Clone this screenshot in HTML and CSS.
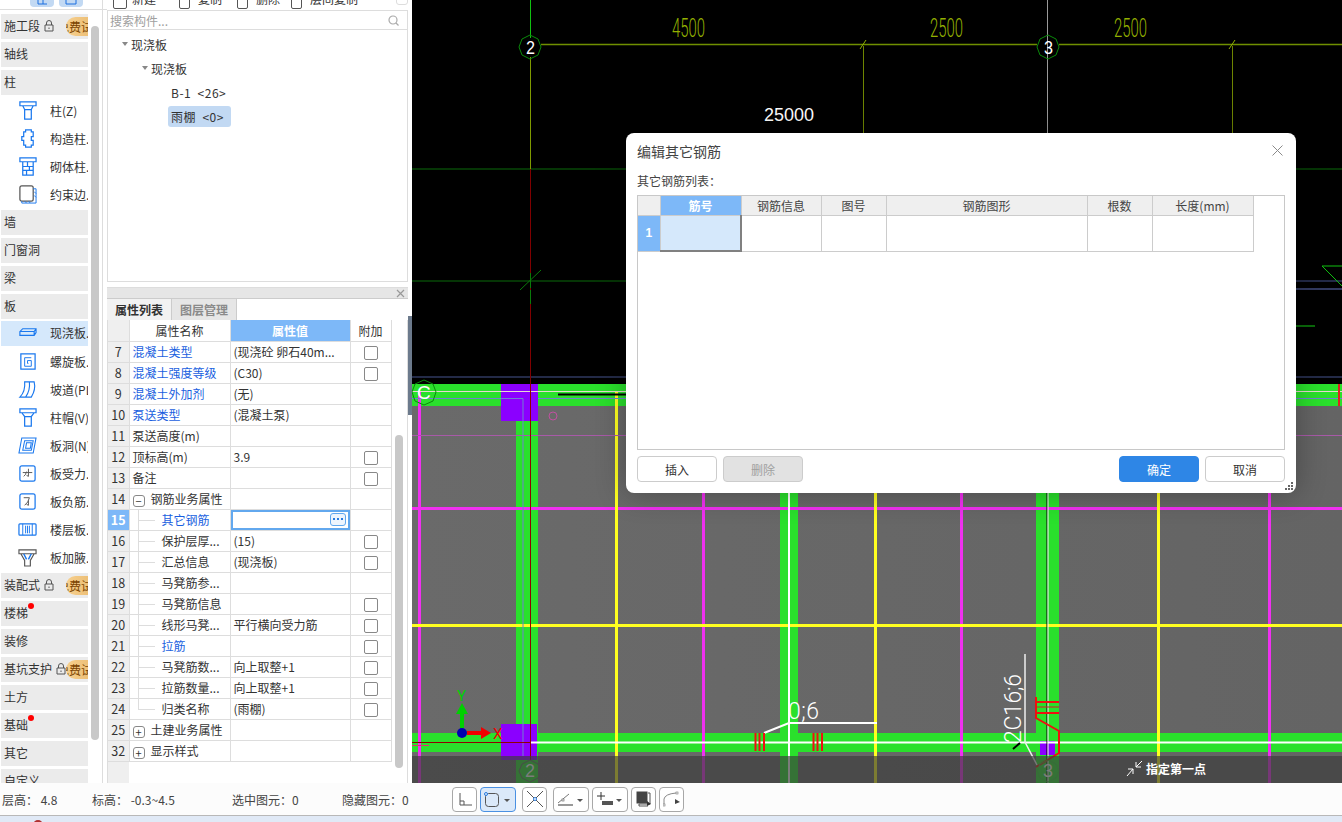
FILE: index.html
```html
<!DOCTYPE html>
<html lang="zh">
<head>
<meta charset="utf-8">
<title>编辑其它钢筋</title>
<link rel="stylesheet" href="styles.css">
</head>
<body>
<div class="app">
  <div class="main">
    <nav class="nav">
      <div class="nav-top">
        <span class="nav-top-btn"><svg width="14" height="6" viewBox="0 0 14 6"><path d="M3 0v4h9M8 0v4" fill="none" stroke="#1a6fe0"/></svg></span>
        <span class="nav-top-btn"><svg width="14" height="6" viewBox="0 0 14 6"><path d="M2 0v4h10V0" fill="none" stroke="#1a6fe0"/></svg></span>
      </div>
      <div class="nav-list">
        <div class="nav-group">施工段<svg class="lock" width="10" height="12" viewBox="0 0 10 12"><path d="M2.5 5V3a2.5 2.5 0 0 1 5 0v2M1 5h8v6H1zM5 7.500v1.500" fill="none" stroke="#555"/></svg><span class="badge"><span>免费试</span></span></div>
        <div class="nav-group">轴线</div>
        <div class="nav-group">柱</div>
        <div class="nav-sub">
          <div class="nav-item"><svg class="ni" viewBox="0 0 20 20"><path d="M2 1h17v4h-17zM5 5l2 4v10h7V9l2-4M7 9h7" fill="none" stroke="#1a78ee" stroke-width="1.300"/></svg>柱(Z)</div>
          <div class="nav-item"><svg class="ni" viewBox="0 0 20 20"><path d="M6 3h2V1h6v2h2v5h-2v4h2v5h-2v2H8v-2H6v-5H4V8h2z" fill="none" stroke="#1a78ee" stroke-width="1.300"/></svg>构造柱...</div>
          <div class="nav-item"><svg class="ni" viewBox="0 0 20 20"><path d="M2 1h17v4h-17zM5 5h11v14H5zM5 10h11M5 14h11M10 5v5M12 10v4M9 14v5" fill="none" stroke="#1a78ee" stroke-width="1.300"/></svg>砌体柱...</div>
          <div class="nav-item"><svg class="ni" viewBox="0 0 20 20"><path d="M2 3a2 2 0 0 1 2-2h10a2 2 0 0 1 2 2v12a2 2 0 0 1-2 2H4a2 2 0 0 1-2-2z" fill="none" stroke="#555" stroke-width="1.300"/><path d="M16 4h3v15H4v-2M17 7l2 2M17 11l2 2M7 17l2 2M11 17l2 2" fill="none" stroke="#1a78ee"/></svg>约束边...</div>
        </div>
        <div class="nav-group">墙</div>
        <div class="nav-group">门窗洞</div>
        <div class="nav-group">梁</div>
        <div class="nav-group">板</div>
        <div class="nav-sub">
          <div class="nav-item nav-item-on"><svg class="ni" viewBox="0 0 20 20"><path d="M2 9l3-3h14v4l-2 3H2zM2 9h15v4M17 9l2-3" fill="none" stroke="#1a78ee" stroke-width="1.200"/></svg>现浇板...</div>
          <div class="nav-item"><svg class="ni" viewBox="0 0 20 20"><path d="M3 2h15v16H3z" fill="none" stroke="#1a78ee" stroke-width="1.300"/><path d="M14 6H7v9h7v-6h-4v3h1" fill="none" stroke="#1a78ee"/></svg>螺旋板...</div>
          <div class="nav-item"><svg class="ni" viewBox="0 0 20 20"><path d="M7 2h10q2 8-3 16H2q6-6 5-16zM12 2q1 9-4 16" fill="none" stroke="#1a78ee" stroke-width="1.200"/></svg>坡道(PL)</div>
          <div class="nav-item"><svg class="ni" viewBox="0 0 20 20"><path d="M2 1h17v4h-17zM4 5l3 4v10h7V9l3-4M7 9h7" fill="none" stroke="#1a78ee" stroke-width="1.300"/></svg>柱帽(V)</div>
          <div class="nav-item"><svg class="ni" viewBox="0 0 20 20"><path d="M4 2h15l-3 16H1zM7 5h9l-2 10H5zM9 7h5l-1 6H8z" fill="none" stroke="#1a78ee" stroke-width="1.100"/></svg>板洞(N)</div>
          <div class="nav-item"><svg class="ni" viewBox="0 0 20 20"><rect x="2" y="2" width="16" height="16" rx="2" fill="none" stroke="#1a78ee" stroke-width="1.300"/><path d="M5 9h10M11 5v8l-2-1M6 13q2-1 3-5" fill="none" stroke="#555"/></svg>板受力...</div>
          <div class="nav-item"><svg class="ni" viewBox="0 0 20 20"><rect x="2" y="2" width="16" height="16" rx="2" fill="none" stroke="#1a78ee" stroke-width="1.300"/><path d="M6 6h6q-1 5-5 8M11 9v5l-2-1" fill="none" stroke="#555"/></svg>板负筋...</div>
          <div class="nav-item"><svg class="ni" viewBox="0 0 20 20"><rect x="1" y="4" width="18" height="12" rx="1" fill="none" stroke="#1a78ee" stroke-width="1.300"/><path d="M5 4v12M15 4v12M8 6v8M10 6v8M12 6v8" fill="none" stroke="#1a78ee"/></svg>楼层板...</div>
          <div class="nav-item"><svg class="ni" viewBox="0 0 20 20"><path d="M1 2h18v4H1zM3 6l4 7v6h6v-6l4-7" fill="none" stroke="#555" stroke-width="1.200"/><path d="M6 6l3 6M14 6l-3 6" stroke="#1a78ee" stroke-width="1.500"/></svg>板加腋...</div>
        </div>
        <div class="nav-group">装配式<svg class="lock" width="10" height="12" viewBox="0 0 10 12"><path d="M2.5 5V3a2.5 2.500 0 0 1 5 0v2M1 5h8v6H1zM5 7.500v1.500" fill="none" stroke="#555"/></svg><span class="badge"><span>免费试</span></span></div>
        <div class="nav-group">楼梯<i class="dot"></i></div>
        <div class="nav-group">装修</div>
        <div class="nav-group">基坑支护<svg class="lock" width="10" height="12" viewBox="0 0 10 12"><path d="M2.5 5V3a2.5 2.500 0 0 1 5 0v2M1 5h8v6H1zM5 7.500v1.500" fill="none" stroke="#555"/></svg><span class="badge"><span>免费试</span></span></div>
        <div class="nav-group">土方</div>
        <div class="nav-group">基础<i class="dot"></i></div>
        <div class="nav-group">其它</div>
        <div class="nav-group">自定义</div>
      </div>
      <div class="nav-scroll"></div>
    </nav>

    <section class="panel">
      <div class="toolbar">
        <div class="tool tool-new"><i class="tool-ic"></i>新建</div>
        <div class="tool tool-copy"><i class="tool-ic tool-ic-s"></i>复制</div>
        <div class="tool tool-del"><i class="tool-ic tool-ic-s"></i>删除</div>
        <div class="tool"><i class="tool-ic tool-ic-s"></i>层间复制</div>
        <i class="tool-end"></i>
      </div>
      <div class="search"><span>搜索构件...</span><svg width="11" height="11" viewBox="0 0 11 11"><circle cx="5" cy="5" r="4" fill="none" stroke="#aaa" stroke-width="1.200"/><path d="M8 8l2.500 2.500" stroke="#aaa" stroke-width="1.200"/></svg></div>
      <div class="tree">
        <div class="tree-row tree-l1"><i class="caret"></i>现浇板</div>
        <div class="tree-row tree-l2"><i class="caret"></i>现浇板</div>
        <div class="tree-row tree-l3"><span class="tree-leaf">B-1&nbsp;&nbsp;&lt;26&gt;</span></div>
        <div class="tree-row tree-l3"><span class="tree-leaf tree-leaf-on">雨棚&nbsp;&nbsp;&lt;0&gt;</span></div>
      </div>
      <div class="prop-head"><svg width="9" height="9" viewBox="0 0 9 9"><path d="M1 1l7 7M8 1l-7 7" stroke="#999" stroke-width="1.200"/></svg></div>
      <div class="tabs"><span class="tab tab-on">属性列表</span><span class="tab">图层管理</span></div>
      <div class="prop-body">
        <table class="props">
          <colgroup><col class="c1"><col class="c2"><col class="c3"><col class="c4"></colgroup>
          <thead><tr><th class="num"></th><th>属性名称</th><th class="th-on">属性值</th><th>附加</th></tr></thead>
          <tbody>
            <tr><td class="num">7</td><td class="name link">混凝土类型</td><td class="val">(现浇砼 卵石40m...</td><td class="chk"><i class="cb"></i></td></tr>
            <tr><td class="num">8</td><td class="name link">混凝土强度等级</td><td class="val">(C30)</td><td class="chk"><i class="cb"></i></td></tr>
            <tr><td class="num">9</td><td class="name link">混凝土外加剂</td><td class="val">(无)</td><td class="chk"></td></tr>
            <tr><td class="num">10</td><td class="name link">泵送类型</td><td class="val">(混凝土泵)</td><td class="chk"></td></tr>
            <tr><td class="num">11</td><td class="name">泵送高度(m)</td><td class="val"></td><td class="chk"></td></tr>
            <tr><td class="num">12</td><td class="name">顶标高(m)</td><td class="val">3.9</td><td class="chk"><i class="cb"></i></td></tr>
            <tr><td class="num">13</td><td class="name">备注</td><td class="val"></td><td class="chk"><i class="cb"></i></td></tr>
            <tr><td class="num">14</td><td class="name"><i class="exp">−</i>钢筋业务属性</td><td class="val"></td><td class="chk"></td></tr>
            <tr><td class="num num-on">15</td><td class="name child link">其它钢筋</td><td class="val val-on"><span class="more"><svg width="10" height="3" viewBox="0 0 10 3"><path d="M0 0h2v2H0zM4 0h2v2H4zM8 0h2v2H8z" fill="#2a7de1"/></svg></span></td><td class="chk"></td></tr>
            <tr><td class="num">16</td><td class="name child">保护层厚...</td><td class="val">(15)</td><td class="chk"><i class="cb"></i></td></tr>
            <tr><td class="num">17</td><td class="name child">汇总信息</td><td class="val">(现浇板)</td><td class="chk"><i class="cb"></i></td></tr>
            <tr><td class="num">18</td><td class="name child">马凳筋参...</td><td class="val"></td><td class="chk"></td></tr>
            <tr><td class="num">19</td><td class="name child">马凳筋信息</td><td class="val"></td><td class="chk"><i class="cb"></i></td></tr>
            <tr><td class="num">20</td><td class="name child">线形马凳...</td><td class="val">平行横向受力筋</td><td class="chk"><i class="cb"></i></td></tr>
            <tr><td class="num">21</td><td class="name child link">拉筋</td><td class="val"></td><td class="chk"><i class="cb"></i></td></tr>
            <tr><td class="num">22</td><td class="name child">马凳筋数...</td><td class="val">向上取整+1</td><td class="chk"><i class="cb"></i></td></tr>
            <tr><td class="num">23</td><td class="name child">拉筋数量...</td><td class="val">向上取整+1</td><td class="chk"><i class="cb"></i></td></tr>
            <tr><td class="num">24</td><td class="name child child-last">归类名称</td><td class="val">(雨棚)</td><td class="chk"><i class="cb"></i></td></tr>
            <tr><td class="num">25</td><td class="name"><i class="exp">+</i>土建业务属性</td><td class="val"></td><td class="chk"></td></tr>
            <tr><td class="num">32</td><td class="name"><i class="exp">+</i>显示样式</td><td class="val"></td><td class="chk"></td></tr>
          </tbody>
        </table>
        <div class="prop-scroll"></div>
      </div>
    </section>

    <div class="splitter"></div>

    <div class="canvas">
      <svg class="cad" width="930" height="783" viewBox="412 0 930 783">
        <defs>
          <linearGradient id="floor" x1="0" y1="0" x2="1" y2="0">
            <stop offset="0" stop-color="#6a6a6a"/><stop offset="1" stop-color="#646464"/>
          </linearGradient>
        </defs>
        <rect x="412" y="0" width="930" height="384" fill="#000"/>
        <rect x="412" y="384" width="930" height="399" fill="url(#floor)"/>

        <!-- upper axis and dimension lines -->
        <path d="M412 169H1342" stroke="#0a6a0a"/>
        <path d="M412 281H626" stroke="#0a6a0a"/>
        <path d="M1296 281H1342" stroke="#46548e"/>
        <path d="M1296 289H1342" stroke="#6474c0"/>
        <path d="M412 377H1342" stroke="#46548e"/>
        <path d="M1296 326H1315" stroke="#0a6a0a" stroke-width="2"/>
        <path d="M1342 266H1322L1342 286" stroke="#10c010" fill="none"/>
        <path d="M530.500 0V38" stroke="#10c010"/>
        <path d="M530.500 57V169" stroke="#7f9a00"/>
        <path d="M530.500 169V384" stroke="#800000"/>
        <path d="M530.500 273V288M530.500 290V304" stroke="#0a7a0a"/>
        <path d="M520 290L541 270" stroke="#0a7a0a"/>
        <path d="M863.500 46V140M1232.500 46V140" stroke="#6e8500"/>
        <path d="M1047.500 0V140" stroke="#9a9a9a"/>
        <path d="M541 44.500H1037M1059 44.500H1342" stroke="#6f8f00" stroke-width="1.500"/>
        <path d="M860 49L866 40M1229 49L1235 40" stroke="#8fb000"/>
        <text class="dim" x="672" y="37" textLength="33" lengthAdjust="spacingAndGlyphs">4500</text>
        <text class="dim" x="930" y="37" textLength="33" lengthAdjust="spacingAndGlyphs">2500</text>
        <text class="dim" x="1114" y="37" textLength="33" lengthAdjust="spacingAndGlyphs">2500</text>
        <text class="len" x="764" y="121" textLength="50">25000</text>
        <polygon points="530,35 538,39 541,47 538,55 530,59 522,55 519,47 522,39" fill="none" stroke="#0a8a0a"/>
        <polygon points="1048,35 1056,39 1059,47 1056,55 1048,59 1040,55 1037,47 1040,39" fill="none" stroke="#0a8a0a"/>
        <text class="axis" x="526" y="54" textLength="9" lengthAdjust="spacingAndGlyphs">2</text>
        <text class="axis" x="1044" y="54" textLength="9" lengthAdjust="spacingAndGlyphs">3</text>

        <!-- walls -->
        <g fill="#2ae02c">
          <rect x="412" y="384" width="930" height="22"/>
          <rect x="412" y="733" width="930" height="19"/>
          <rect x="516" y="406" width="22" height="377"/>
          <rect x="780" y="406" width="18" height="377"/>
          <rect x="1036" y="406" width="23" height="377"/>
        </g>
        <!-- reinforcing grid -->
        <g fill="#f030f0">
          <rect x="418" y="392" width="3" height="391"/>
          <rect x="702" y="406" width="3" height="377"/>
          <rect x="960" y="406" width="3" height="377"/>
          <rect x="1268" y="406" width="3" height="377"/>
          <rect x="412" y="507" width="930" height="3"/>
        </g>
        <g fill="#ffff20">
          <rect x="615" y="392" width="3" height="391"/>
          <rect x="874" y="406" width="3" height="377"/>
          <rect x="1157" y="406" width="3" height="377"/>
          <rect x="412" y="624" width="930" height="3"/>
        </g>
        <path d="M412 435.500H1342" stroke="#a85aa8"/>
        <circle cx="553" cy="416" r="4" fill="none" stroke="#c050a0"/>
        <!-- columns -->
        <g fill="#8b00ff">
          <rect x="501" y="384" width="37" height="37"/>
          <rect x="501" y="724" width="36" height="36"/>
          <rect x="1040" y="741" width="15" height="14"/>
        </g>
        <!-- thin centre lines -->
        <path d="M412 398.500H523V756M538 398.500H1342" stroke="#7080d0" fill="none"/>
        <path d="M412 391.500H1342" stroke="#e8d8d0"/>
        <path d="M558 394.500H630" stroke="#000" stroke-width="2"/>
        <path d="M530.500 384V760M412 742.500H530" stroke="#900000" fill="none"/>
        <path d="M531 742.500H1342" stroke="#fff" stroke-width="2"/>
        <path d="M789 406V783" stroke="#fff" stroke-width="2"/>
        <path d="M1047 406V783" stroke="#000"/>
        <path d="M1048 406V783" stroke="#fff"/>
        <rect x="1338" y="384" width="2" height="22" fill="#e02020"/>
        <rect x="412" y="745" width="17" height="1" fill="#e03070"/>
        <polygon points="424,380 433,384 436,392 433,401 424,405 415,401 412,392 415,384" fill="none" stroke="#0a8a0a"/>
        <text class="axis-c" x="417" y="399">C</text>

        <!-- annotations -->
        <path d="M764 733L789 723H877" stroke="#fff" stroke-width="2" fill="none"/>
        <text class="note" x="788" y="719" textLength="31">0;6</text>
        <path d="M755.500 733V751M759.500 733V751M764 733V751M813.500 733V751M817.500 733V751M822 733V751" stroke="#f01010" stroke-width="2"/>
        <path d="M1025 654V742L1037 765" stroke="#eee" stroke-width="1.500" fill="none"/>
        <text class="note" transform="translate(1021 743) rotate(-90)" textLength="69">2C16;6</text>
        <path d="M1013 749L1020 743" stroke="#000" stroke-width="2"/>
        <path d="M1036 697V718L1059 731V753L1036 767M1036 702H1059M1036 713H1059" stroke="#f01010" stroke-width="2" fill="none"/>
        <path d="M1036 707H1059" stroke="#d02020"/>

        <!-- origin glyph -->
        <path d="M467 733H482" stroke="#f00000" stroke-width="4"/>
        <polygon points="481,727 491,733 481,739" fill="#f00000"/>
        <path d="M462 728V712" stroke="#00d000" stroke-width="4"/>
        <polygon points="456,714 462,703 468,714" fill="#00d000"/>
        <circle cx="462" cy="733" r="5" fill="#0000b0"/>
        <text class="glyph-x" x="493" y="739">X</text>
        <text class="glyph-y" x="457" y="701">Y</text>

        <!-- command strip -->
        <rect x="412" y="756" width="930" height="27" fill="#3c3c3c" opacity=".67"/>
        <polygon points="530,760 538,764 541,771 538,778 530,782 522,778 519,771 522,764" fill="none" stroke="#4a4a4a"/>
        <polygon points="1048,760 1056,764 1059,771 1056,778 1048,782 1040,778 1037,771 1040,764" fill="none" stroke="#3a6a3a"/>
        <text class="axis-dim" x="525" y="777" textLength="10" lengthAdjust="spacingAndGlyphs">2</text>
        <text class="axis-dim" x="1043" y="777" textLength="10" lengthAdjust="spacingAndGlyphs">3</text>
        <path d="M1127 776L1133 769M1133 769V774M1133 769H1128M1142 761L1136 767M1136 767V762M1136 767H1141" stroke="#fff" fill="none"/>
        <text class="hint" x="1146" y="774">指定第一点</text>
      </svg>

      <div class="modal">
        <header class="modal-head"><span class="modal-title">编辑其它钢筋</span><svg width="11" height="11" viewBox="0 0 11 11"><path d="M.5 .5l10 10M10.500 .5l-10 10" stroke="#8a8a8a"/></svg></header>
        <div class="modal-label">其它钢筋列表&#xFF1A;</div>
        <div class="modal-table">
          <table class="rebar">
            <colgroup><col class="r0"><col class="r1"><col class="r2"><col class="r3"><col class="r4"><col class="r5"><col class="r6"></colgroup>
            <thead><tr><th></th><th class="th-on">筋号</th><th>钢筋信息</th><th>图号</th><th>钢筋图形</th><th>根数</th><th>长度(mm)</th></tr></thead>
            <tbody><tr><td class="rebar-num">1</td><td class="rebar-on"></td><td></td><td></td><td></td><td></td><td></td></tr></tbody>
          </table>
        </div>
        <footer class="modal-foot">
          <button class="btn">插入</button>
          <button class="btn btn-off">删除</button>
          <span class="foot-gap"></span>
          <button class="btn btn-primary">确定</button>
          <button class="btn">取消</button>
        </footer>
        <svg class="grip" width="9" height="9" viewBox="0 0 9 9"><path d="M6 0h2v2H6zM3 3h2v2H3zM6 3h2v2H6zM0 6h2v2H0zM3 6h2v2H3zM6 6h2v2H6z" fill="#666"/></svg>
      </div>
    </div>
  </div>

  <div class="status">
    <span class="st st1">层高&#xFF1A;&nbsp;4.8</span>
    <span class="st st2">标高&#xFF1A;&nbsp;-0.3~4.5</span>
    <span class="st st3">选中图元&#xFF1A;0</span>
    <span class="st st4">隐藏图元&#xFF1A;0</span>
    <div class="snaps">
      <span class="snap"><svg width="14" height="14" viewBox="0 0 14 14"><path d="M2 1v12h12M2 9h4v4" fill="none" stroke="#555"/></svg></span>
      <span class="snap snap-on snap-w"><svg width="16" height="16" viewBox="0 0 16 16"><rect x="1.500" y="2.500" width="13" height="13" rx="3" fill="none" stroke="#555"/><circle cx="2" cy="3" r="1.500" fill="#dbe9f9" stroke="#2a7de1"/></svg><i class="drop"></i></span>
      <span class="snap snap-gap"><svg width="22" height="22" viewBox="0 0 22 22"><path d="M3 3l16 16M19 3L3 19" stroke="#555"/><circle cx="11" cy="11" r="1.500" fill="#fff" stroke="#2a7de1"/></svg></span>
      <span class="snap snap-m snap-gap"><svg width="16" height="14" viewBox="0 0 16 14"><path d="M1 11L12 2" stroke="#777"/><path d="M1 13H16" stroke="#999" stroke-width="2"/><rect x="5" y="7" width="2" height="2" fill="#fff" stroke="#777" stroke-width=".7"/></svg><i class="drop"></i></span>
      <span class="snap snap-m"><svg width="18" height="14" viewBox="0 0 18 14"><path d="M1 4h8M5 0v8" stroke="#333"/><rect x="6" y="9" width="11" height="4" fill="#555"/></svg><i class="drop"></i></span>
      <span class="snap"><svg width="16" height="16" viewBox="0 0 16 16"><rect x="1" y="1" width="10" height="11" fill="#444" stroke="#444"/><path d="M12 2h2v11H3v2h9" fill="none" stroke="#555"/><path d="M11 10l4 3-4 2z" fill="#333"/></svg></span>
      <span class="snap"><svg width="18" height="16" viewBox="0 0 18 16"><path d="M1 14V8Q2 3 13 2" fill="none" stroke="#888"/><rect x="0" y="13" width="2" height="2" fill="#fff" stroke="#777" stroke-width=".6"/><rect x="13" y="1" width="2" height="2" fill="#fff" stroke="#777" stroke-width=".6"/><path d="M12 8l5 3-5 2z" fill="#444"/></svg></span>
    </div>
  </div>
  <div class="taskbar"><i class="task-dot"></i></div>
</div>
</body>
</html>
```
FILE: styles.css
```css
* { box-sizing: border-box; }
html, body { margin: 0; padding: 0; }
body {
  width: 1342px;
  height: 822px;
  overflow: hidden;
  background: #fff;
  font-family: "Noto Sans CJK SC", "Noto Sans", sans-serif;
  font-size: 12px;
  color: #333;
}
.app { display: flex; flex-direction: column; height: 822px; }
.main { display: flex; height: 783px; flex: none; }

/* left navigation */
.nav { width: 107px; flex: none; position: relative; overflow: hidden; background: #fff; }
.nav::after { content: ""; position: absolute; left: 102px; top: 0; bottom: 0; width: 1px; background: #ddd; }
.nav-top { height: 10px; display: flex; gap: 5px; padding-left: 30px; border-bottom: 1px solid #ddd; }
.nav-top-btn { width: 24px; height: 7px; background: #c2d9f3; border-radius: 0 0 4px 4px; display: flex; justify-content: center; }
.nav-list { width: 87px; margin-left: 1px; padding-top: 4px; }
.nav-group {
  height: 25px; margin-bottom: 3px; padding: 0 0 2px 3px; background: #ebebeb;
  display: flex; align-items: center; position: relative; overflow: hidden; white-space: nowrap;
  line-height: 23px;
}
.lock { margin-left: 4px; flex: none; }
.badge {
  position: absolute; right: 0; top: 3px; width: 22px; height: 19px;
  background: linear-gradient(90deg, #f7d08e, #edc078); border-radius: 10px 0 0 10px;
  color: #7a4300; overflow: hidden; font-size: 12px; line-height: 19px;
}
.badge span { display: block; width: 40px; margin-left: -9px; }
.dot { position: absolute; left: 27px; top: 2px; width: 6px; height: 6px; border-radius: 50%; background: #f00; }
.nav-group:has(.dot) { overflow: visible; }
.nav-sub { margin: -1px 0 1px; }
.nav-item { height: 28px; display: flex; align-items: center; padding: 0 0 2px 17px; overflow: hidden; white-space: nowrap; line-height: 23px; }
.nav-item-on { background: #d5e8fb; height: 25px; margin: 1px 0 2px; }
.ni { width: 19px; height: 19px; margin-right: 13px; flex: none; }
.nav-scroll { position: absolute; left: 91px; top: 26px; width: 8px; height: 714px; background: #c8c8c8; border-radius: 4px; }

/* middle panel */
.panel { width: 301px; flex: none; display: flex; flex-direction: column; background: #fff; }
.toolbar { height: 10px; flex: none; overflow: hidden; position: relative; display: flex; padding-left: 6px; gap: 0; }
.tool { height: 20px; margin-top: -11px; display: flex; align-items: center; line-height: 20px; flex: none; }
.tool-new { width: 66px; }
.tool-copy { width: 58px; }
.tool-del { width: 54px; }
.tool-ic { width: 14px; height: 19px; border: 1px solid #555; border-radius: 2px; margin-right: 5px; }
.tool-ic-s { width: 11px; margin-right: 8px; }
.tool-end { position: absolute; right: 0; top: -5px; width: 12px; height: 10px; border: 1px solid #ddd; border-radius: 3px; }
.search {
  height: 20px; flex: none; display: flex; align-items: center; justify-content: space-between;
  padding: 0 8px 0 2px; border: 1px solid #ddd; color: #a0a0a0;
}
.tree { height: 252px; flex: none; border: 1px solid #ddd; border-top: 0; padding-top: 2px; }
.tree-row { height: 24px; display: flex; align-items: center; position: relative; }
.tree-l1 { padding-left: 14px; }
.tree-l2 { padding-left: 34px; }
.tree-l3 { padding-left: 60px; }
.caret { width: 0; height: 0; border: 3.5px solid transparent; border-top: 4px solid #888; border-bottom: 0; margin-right: 3px; margin-top: 0; }
.tree-leaf { height: 21px; line-height: 21px; padding: 0 3px; border-radius: 3px; letter-spacing: .5px; }
.tree-leaf-on { background: #c2d9f3; width: 63px; }
.prop-head {
  height: 11px; margin-top: 5px; flex: none; background: #e6e6e6; border-top: 1px solid #ddd;
  display: flex; justify-content: flex-end; align-items: center; padding-right: 3px;
}
.tabs { height: 22px; flex: none; display: flex; background: #fff; border-top: 1px solid #ccc; }
.tab { width: 65px; background: #e6e6e6; color: #8a8a8a; font-weight: 700; text-align: center; line-height: 21px; border-right: 1px solid #ccc; }
.tab-on { background: #f2f2f2; color: #333; }
.prop-body { flex: 1; position: relative; border-left: 1px solid #ddd; border-right: 1px solid #ddd; background: linear-gradient(90deg, #efefef 21px, #fff 21px); overflow: hidden; }
.props { table-layout: fixed; border-collapse: collapse; width: 283px; background: #fff; }
.c1 { width: 21px; } .c2 { width: 101px; } .c3 { width: 120px; } .c4 { width: 41px; }
.props th, .props td { height: 21px; border: 1px solid #ddd; padding: 0; font-weight: 400; white-space: nowrap; overflow: hidden; }
.props th { text-align: center; }
.props tr:first-child th { border-top: 0; }
.props th:first-child, .props td:first-child { border-left: 0; }
.th-on { background: #7db8f8; color: #fff; font-weight: 700 !important; }
.num { background: #efefef; text-align: center; font-size: 12.5px; }
.num-on { background: #7db8f8; color: #fff; font-weight: 700 !important; }
.name { padding-left: 3px !important; position: relative; }
.link { color: #1a5fe0; }
.child { padding-left: 32px !important; overflow: visible !important; }
.child::before { content: ""; position: absolute; left: 8px; top: -1px; bottom: -1px; width: 1px; background: #ddd; }
.child::after { content: ""; position: absolute; left: 8px; top: 10px; width: 17px; height: 1px; background: #ddd; }
.child-last::before { bottom: 10px; }
.val { padding-left: 3px !important; position: relative; }
.val-on { box-shadow: inset 0 0 0 2px #62a8ee; }
.more { position: absolute; right: 4px; top: 3px; width: 16px; height: 13px; border: 1px solid #62a8ee; border-radius: 3px; display: flex; align-items: center; justify-content: center; background: #eef5fd; }
.chk { text-align: center; }
.cb { display: inline-block; width: 14px; height: 14px; border: 1px solid #888; border-radius: 2px; vertical-align: middle; background: #fff; }
.exp { display: inline-block; width: 12px; height: 12px; margin-right: 6px; border: 1px solid #888; border-radius: 3px; font-style: normal; line-height: 10px; text-align: center; vertical-align: -2px; font-size: 11px; }
.prop-scroll { position: absolute; right: 4px; top: 115px; width: 8px; height: 333px; background: #c8c8c8; border-radius: 4px; }
.splitter { width: 4px; flex: none; background: linear-gradient(#fff 316px, #6c7a8c 316px, #6c7a8c 415px, #fff 415px); }

/* canvas */
.canvas { flex: 1; position: relative; overflow: hidden; background: #000; }
.cad { display: block; }
.dim { font-family: "Roboto", "Liberation Sans", sans-serif; font-weight: 300; font-size: 26px; fill: #94b000; }
.len { font-family: "Liberation Sans", sans-serif; font-size: 18px; fill: #fff; }
.axis { font-family: "Liberation Sans", sans-serif; font-size: 18px; fill: #fff; }
.axis-c { font-family: "Liberation Sans", sans-serif; font-size: 19px; fill: #fff; }
.axis-dim { font-family: "Liberation Sans", sans-serif; font-size: 18px; fill: #7c7c7c; }
.note { font-family: "Roboto", "Liberation Sans", sans-serif; font-weight: 300; font-size: 23px; fill: #fff; }
.glyph-x { font-family: "Roboto", sans-serif; font-size: 15px; fill: #f00000; }
.glyph-y { font-family: "Roboto", sans-serif; font-size: 15px; fill: #00d000; }
.hint { font-family: "Noto Sans CJK SC", sans-serif; font-size: 12px; font-weight: 700; fill: #fff; }

/* dialog */
.modal {
  position: absolute; left: 214px; top: 133px; width: 670px; height: 360px;
  background: #fff; border-radius: 8px; box-shadow: 0 0 30px rgba(0,0,0,.3);
  display: flex; flex-direction: column; padding: 0 11px;
}
.modal-head { height: 39px; flex: none; display: flex; align-items: center; justify-content: space-between; padding: 0 2px 4px 0; }
.modal-title { font-size: 14px; color: #444; }
.modal-label { height: 23px; line-height: 17px; color: #444; flex: none; }
.modal-table { height: 255px; flex: none; border: 1px solid #c8c8c8; }
.rebar { table-layout: fixed; border-collapse: collapse; width: 615px; }
.r0 { width: 22px; } .r1 { width: 81px; } .r2 { width: 80px; } .r3 { width: 65px; } .r4 { width: 201px; } .r5 { width: 65px; } .r6 { width: 101px; }
.rebar th { height: 19px; padding: 0; background: #efefef; border: 1px solid #ccc; border-top: 0; font-weight: 400; text-align: center; color: #444; }
.rebar th:first-child, .rebar td:first-child { border-left: 0; }
.rebar th.th-on { background: #7db8f8; color: #fff; font-weight: 700; }
.rebar td { height: 36px; padding: 0; border: 1px solid #ccc; }
.rebar td.rebar-num { background: #7db8f8; color: #fff; font-weight: 700; text-align: center; font-family: "Liberation Sans", sans-serif; }
.rebar td.rebar-on { background: #d5e8fb; border-right: 2px solid #808080; border-bottom: 2px solid #808080; }
.modal-foot { height: 26px; margin-top: 6px; flex: none; display: flex; gap: 6px; }
.foot-gap { flex: 1; }
.btn { width: 80px; height: 26px; padding: 0; font: inherit; color: #333; background: #fff; border: 1px solid #ccc; border-radius: 4px; }
.btn-off { background: #e2e2e2; color: #a0a0a0; }
.btn-primary { background: #2e86e6; border-color: #2e86e6; color: #fff; }
.grip { position: absolute; right: 2px; bottom: 2px; }

/* status */
.status { height: 32px; flex: none; display: flex; align-items: center; background: #fcfcfc; white-space: nowrap; color: #444; }
.st { flex: none; }
.st1 { margin-left: 2px; width: 90px; }
.st2 { width: 140px; }
.st3 { width: 110px; }
.st4 { width: 110px; }
.snaps { display: flex; gap: 3px; height: 25px; }
.snap { width: 25px; height: 25px; border: 1px solid #a8a8a8; border-radius: 4px; background: #fff; display: flex; align-items: center; justify-content: center; position: relative; }
.snap-on { background: #dbe9f9; border-color: #4a90e2; }
.snap-w { width: 36px; justify-content: flex-start; padding-left: 3px; }
.snap-m { width: 36px; justify-content: flex-start; padding-left: 3px; }
.snap-gap { margin-left: 3px; }
.drop { position: absolute; right: 5px; top: 11px; width: 0; height: 0; border: 3px solid transparent; border-top: 3px solid #555; border-bottom: 0; }
.taskbar { flex: 1; background: #e0e9f6; border-top: 1px solid #b8b8b8; position: relative; overflow: hidden; }
.task-dot { position: absolute; left: 33px; top: 4px; width: 10px; height: 10px; border-radius: 50%; background: #b03030; }
```
